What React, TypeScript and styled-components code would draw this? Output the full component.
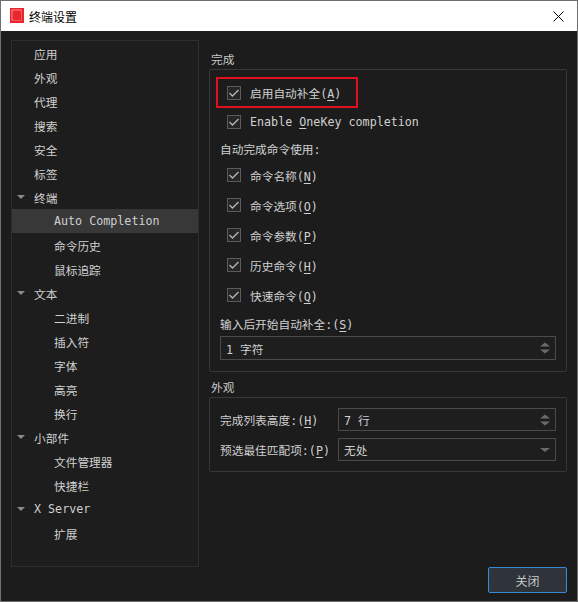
import React from "react";
import styled, { createGlobalStyle } from "styled-components";

const Global = createGlobalStyle`
  html, body { margin: 0; padding: 0; background: #1c1c1c; }
  * { box-sizing: border-box; }
`;

const FONT = `"DejaVu Sans Mono", "Noto Sans CJK SC", monospace`;

const Window = styled.div`
  width: 578px;
  height: 602px;
  border: 1px solid #707070;
  display: flex;
  flex-direction: column;
  background: #1c1c1c;
  font-family: ${FONT};
  font-size: 11.7px;
  color: #d0d0d0;
  overflow: hidden;
`;

const TitleBar = styled.div`
  height: 30px;
  background: #ffffff;
  display: flex;
  align-items: center;
  padding-left: 8px;
  padding-right: 13px;
  flex-shrink: 0;
`;

const TitleText = styled.span`
  font-family: "Noto Sans CJK SC", sans-serif;
  font-size: 12px;
  color: #000;
  margin-left: 4px;
  flex: 1;
`;

const Body = styled.div`
  flex: 1;
  display: flex;
  flex-direction: column;
  padding: 9px 10px 8px 10px;
`;

const Main = styled.div`
  display: flex;
  gap: 10px;
  height: 527px;
`;

const Tree = styled.div`
  width: 188px;
  height: 100%;
  border: 1px solid #2e2e2e;
  background: #1d1d1d;
  display: flex;
  flex-direction: column;
`;

const TreeRow = styled.div<{ $level: number; $selected?: boolean }>`
  height: 24px;
  display: flex;
  align-items: center;
  position: relative;
  padding-left: ${(p) => (p.$level === 0 ? 22 : 42)}px;
  background: ${(p) => (p.$selected ? "#383838" : "transparent")};
  white-space: nowrap;
`;

const Arrow = styled.span`
  position: absolute;
  left: 5px;
  top: 10px;
  width: 0;
  height: 0;
  border-left: 4px solid transparent;
  border-right: 4px solid transparent;
  border-top: 4px solid #8a8a8a;
`;

const Right = styled.div`
  flex: 1;
  display: flex;
  flex-direction: column;
`;

const GroupTitle = styled.div<{ $top: number }>`
  padding: ${(p) => p.$top}px 0 1px 2px;
  line-height: 16px;
  height: ${(p) => p.$top + 17}px;
  color: #c8c8c8;
`;

const Group = styled.div<{ $pt: number; $pb: number }>`
  border: 1px solid #383838;
  border-radius: 2px;
  padding: ${(p) => p.$pt}px 10px ${(p) => p.$pb}px 10px;
  display: flex;
  flex-direction: column;
`;

const Highlight = styled.div`
  width: 142px;
  border: 2px solid #e0101c;
  margin-left: -4px;
  padding-left: 9px;
`;

const CheckRow = styled.div<{ $h: number; $indent: number }>`
  height: ${(p) => p.$h}px;
  display: flex;
  align-items: center;
  gap: 9px;
  margin-left: ${(p) => p.$indent}px;
  white-space: nowrap;
`;

const Box = styled.span`
  width: 14px;
  height: 14px;
  border: 1px solid #5a5a5a;
  background: #262626;
  display: flex;
  align-items: center;
  justify-content: center;
  flex-shrink: 0;
`;

const Label = styled.div<{ $h: number }>`
  height: ${(p) => p.$h}px;
  display: flex;
  align-items: center;
  white-space: nowrap;
`;

const Field = styled.div<{ $h: number }>`
  height: ${(p) => p.$h}px;
  border: 1px solid #4a4a4a;
  background: #1e1e1e;
  display: flex;
  align-items: center;
  padding-left: 5px;
  position: relative;
  flex: 1;
`;

const SpinArrows = styled.div`
  position: absolute;
  right: 5px;
  top: 50%;
  transform: translateY(-50%);
  display: flex;
  flex-direction: column;
  gap: 3px;
`;

const Tri = styled.span<{ $up?: boolean }>`
  width: 0;
  height: 0;
  border-left: 5px solid transparent;
  border-right: 5px solid transparent;
  ${(p) => (p.$up ? "border-bottom: 4px solid #6a6a6a;" : "border-top: 4px solid #6a6a6a;")}
`;

const FormRow = styled.div`
  display: flex;
  align-items: center;
`;

const FormLabel = styled.div`
  width: 118px;
  white-space: nowrap;
`;

const Footer = styled.div`
  display: flex;
  justify-content: flex-end;
  margin-top: 0;
`;

const Button = styled.button`
  width: 79px;
  height: 26px;
  border: 1px solid #3a8ad4;
  border-radius: 2px;
  background: #2f333a;
  color: #c8c8c8;
  font-family: "Noto Sans CJK SC", sans-serif;
  font-size: 12px;
  padding: 0;
`;

const U = styled.u`
  text-underline-offset: 2px;
`;

const Check = () => (
  <Box>
    <svg width="12" height="12" viewBox="0 0 12 12">
      <polyline points="1.5,6 4.5,9 10.5,3" fill="none" stroke="#b4b4b4" strokeWidth="1.4" />
    </svg>
  </Box>
);

const tree: { text: string; level: number; arrow?: boolean; selected?: boolean }[] = [
  { text: "应用", level: 0 },
  { text: "外观", level: 0 },
  { text: "代理", level: 0 },
  { text: "搜索", level: 0 },
  { text: "安全", level: 0 },
  { text: "标签", level: 0 },
  { text: "终端", level: 0, arrow: true },
  { text: "Auto Completion", level: 1, selected: true },
  { text: "命令历史", level: 1 },
  { text: "鼠标追踪", level: 1 },
  { text: "文本", level: 0, arrow: true },
  { text: "二进制", level: 1 },
  { text: "插入符", level: 1 },
  { text: "字体", level: 1 },
  { text: "高亮", level: 1 },
  { text: "换行", level: 1 },
  { text: "小部件", level: 0, arrow: true },
  { text: "文件管理器", level: 1 },
  { text: "快捷栏", level: 1 },
  { text: "X Server", level: 0, arrow: true },
  { text: "扩展", level: 1 },
];

const cmdOpts: [string, string][] = [
  ["命令名称", "N"],
  ["命令选项", "O"],
  ["命令参数", "P"],
  ["历史命令", "H"],
  ["快速命令", "Q"],
];

export default function App() {
  return (
    <>
      <Global />
      <Window>
        <TitleBar>
          <svg width="16" height="16" viewBox="0 0 16 16">
            <rect x="1" y="0" width="14" height="15" fill="#e8262c" />
            <rect x="3" y="2" width="9" height="10" fill="none" stroke="#ff8a8a" strokeWidth="1" />
            <rect x="4" y="3" width="8" height="9" fill="#e8262c" />
          </svg>
          <TitleText>终端设置</TitleText>
          <svg width="11" height="11" viewBox="0 0 11 11">
            <path d="M0.5 0.5 L10.5 10.5 M10.5 0.5 L0.5 10.5" stroke="#000" strokeWidth="1" />
          </svg>
        </TitleBar>
        <Body>
          <Main>
            <Tree>
              {tree.map((t) => (
                <TreeRow key={t.text} $level={t.level} $selected={t.selected}>
                  {t.arrow && <Arrow />}
                  {t.text}
                </TreeRow>
              ))}
            </Tree>
            <Right>
              <GroupTitle $top={12}>完成</GroupTitle>
              <Group $pt={7} $pb={11}>
                <Highlight>
                  <CheckRow $h={27} $indent={0}>
                    <Check />
                    <span>
                      启用自动补全(<U>A</U>)
                    </span>
                  </CheckRow>
                </Highlight>
                <CheckRow $h={28} $indent={7}>
                  <Check />
                  <span>
                    Enable <U>O</U>neKey completion
                  </span>
                </CheckRow>
                <Label $h={24}>自动完成命令使用:</Label>
                {cmdOpts.map(([t, k]) => (
                  <CheckRow key={t} $h={30} $indent={7}>
                    <Check />
                    <span>
                      {t}(<U>{k}</U>)
                    </span>
                  </CheckRow>
                ))}
                <Label $h={26}>
                  <span>
                    输入后开始自动补全:(<U>S</U>)
                  </span>
                </Label>
                <FormRow>
                  <Field $h={24}>
                    1 字符
                    <SpinArrows>
                      <Tri $up />
                      <Tri />
                    </SpinArrows>
                  </Field>
                </FormRow>
              </Group>
              <GroupTitle $top={8}>外观</GroupTitle>
              <Group $pt={10} $pb={10}>
                <FormRow>
                  <FormLabel>
                    完成列表高度:(<U>H</U>)
                  </FormLabel>
                  <Field $h={23}>
                    7 行
                    <SpinArrows>
                      <Tri $up />
                      <Tri />
                    </SpinArrows>
                  </Field>
                </FormRow>
                <FormRow style={{ marginTop: 7 }}>
                  <FormLabel>
                    预选最佳匹配项:(<U>P</U>)
                  </FormLabel>
                  <Field $h={23}>
                    无处
                    <SpinArrows>
                      <Tri />
                    </SpinArrows>
                  </Field>
                </FormRow>
              </Group>
            </Right>
          </Main>
          <Footer>
            <Button>关闭</Button>
          </Footer>
        </Body>
      </Window>
    </>
  );
}
